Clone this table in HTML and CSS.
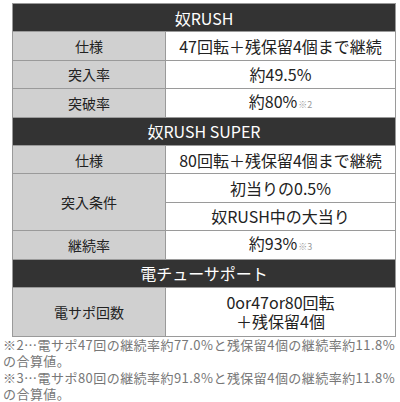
FILE: index.html
```html
<!DOCTYPE html>
<html lang="ja">
<head>
<meta charset="utf-8">
<link rel="stylesheet" href="styles.css">
</head>
<body>
<table class="spec">
  <colgroup><col class="c-label"><col class="c-val"></colgroup>
  <tr><th colspan="2" class="head">奴RUSH</th></tr>
  <tr><td class="label">仕様</td><td class="val">47回転＋残保留4個まで継続</td></tr>
  <tr><td class="label">突入率</td><td class="val">約49.5%</td></tr>
  <tr><td class="label">突破率</td><td class="val">約80%<span class="ref">※2</span></td></tr>
  <tr><th colspan="2" class="head">奴RUSH SUPER</th></tr>
  <tr><td class="label">仕様</td><td class="val">80回転＋残保留4個まで継続</td></tr>
  <tr><td class="label" rowspan="2">突入条件</td><td class="val">初当りの0.5%</td></tr>
  <tr><td class="val">奴RUSH中の大当り</td></tr>
  <tr><td class="label">継続率</td><td class="val">約93%<span class="ref">※3</span></td></tr>
  <tr><th colspan="2" class="head">電チューサポート</th></tr>
  <tr><td class="label tall">電サポ回数</td><td class="val tall"><div class="line">0or47or80回転</div><div class="line">＋残保留4個</div></td></tr>
</table>
<p class="note">※2…電サポ47回の継続率約77.0%と残保留4個の継続率約11.8%の合算値。</p>
<p class="note">※3…電サポ80回の継続率約91.8%と残保留4個の継続率約11.8%の合算値。</p>
</body>
</html>
```
FILE: styles.css
```css
html, body {
  margin: 0;
  padding: 0;
  background: #fff;
}
body {
  padding: 3px 0 0 3px;
  font-family: "Noto Sans CJK JP", "Noto Sans", sans-serif;
  color: #333;
}
.spec {
  margin-left: 9px;
  width: 384px;
  border-collapse: collapse;
  table-layout: fixed;
}
.c-label {
  width: 153px;
}
.spec th, .spec td {
  border: 1px solid #9a9a9a;
  padding: 0;
  height: 27.4px;
  text-align: center;
  vertical-align: middle;
}
.spec .head {
  background: #333;
  color: #fff;
  font-weight: normal;
  font-size: 16px;
  line-height: 18px;
}
.spec .label {
  background: #d0d0d0;
  font-size: 14px;
  line-height: 16px;
  color: #222;
}
.spec .val {
  background: #fff;
  font-size: 16px;
  line-height: 18px;
  color: #222;
}
.spec .tall {
  height: 48px;
}
.line {
  line-height: 19px;
}
.ref {
  font-size: 9px;
  color: #999;
  margin-left: 1px;
}
.note {
  margin: 0;
  font-size: 13px;
  line-height: 16.5px;
  color: #777;
  letter-spacing: 0.45px;
}
```
